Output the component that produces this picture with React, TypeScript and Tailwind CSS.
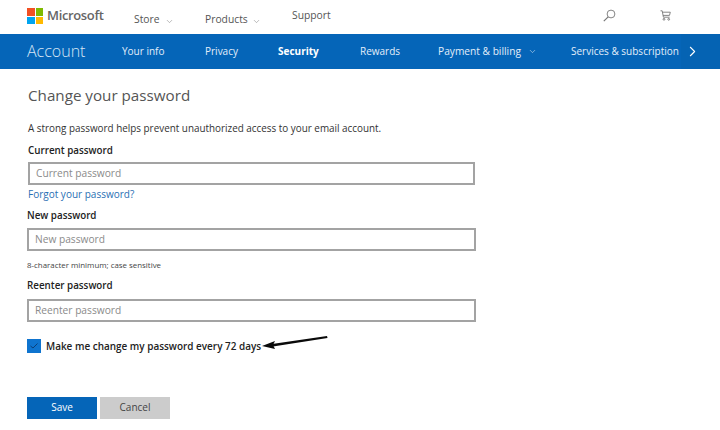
import { ChevronDown, ChevronRight } from 'lucide-react';

function Field({ placeholder, className }: { placeholder: string; className: string }) {
    return (
        <div className={`h-[23px] border-2 border-[#a3a3a3] flex items-center pl-[6px] text-[10.2px] text-[#8a8a8a] ${className}`}>
            {placeholder}
        </div>
    );
}

export default function App() {
    return (
        <div className="w-[720px] h-[430px] overflow-hidden bg-white font-['Open_Sans',sans-serif] text-[#222]">
            {/* Top nav */}
            <div className="h-[34px] flex items-center">
                <div className="ml-[27px] grid grid-cols-2 gap-[1px] w-[16px] h-[16px] -mt-[2px] shrink-0">
                    <div className="bg-[#f25022]" />
                    <div className="bg-[#7fba00]" />
                    <div className="bg-[#00a4ef]" />
                    <div className="bg-[#ffb900]" />
                </div>
                <span className="ml-[4px] w-[56px] -mt-[3px] text-[13px] font-semibold text-[#666] tracking-[-0.35px]">Microsoft</span>
                <div className="ml-[31px] w-[71px] flex items-center text-[10.3px] text-[#555] mt-[5px]">
                    <span>Store</span>
                    <ChevronDown size={9} strokeWidth={1.5} className="ml-[5px] mt-[4px] text-[#888]" />
                </div>
                <div className="w-[87px] flex items-center text-[10.3px] text-[#555] mt-[5px]">
                    <span>Products</span>
                    <ChevronDown size={9} strokeWidth={1.5} className="ml-[4px] mt-[4px] text-[#888]" />
                </div>
                <span className="w-[311px] -mt-[3px] text-[10.3px] text-[#555]">Support</span>
                <svg width="13" height="13" viewBox="0 0 13 13" fill="none" stroke="#777" strokeWidth="0.9" className="-mt-[3px] shrink-0">
                    <circle cx="8" cy="5" r="3.9" />
                    <path d="M5.2 7.8 L0.8 12.2" strokeWidth="1.2" />
                </svg>
                <svg width="11" height="11" viewBox="0 0 11 11" fill="none" stroke="#777" strokeWidth="0.9" className="ml-[44px] -mt-[3px] shrink-0">
                    <path d="M0.5 0.8 L2.2 0.8 L3.4 7.2 L9.6 7.2" />
                    <path d="M2.5 2.2 L10.3 2.2 L9.5 5.4 L3 5.4" />
                    <circle cx="4" cy="9.3" r="0.9" />
                    <circle cx="8.7" cy="9.3" r="0.9" />
                </svg>
            </div>

            {/* Account bar */}
            <div className="h-[35px] bg-[#0565b8] flex items-center text-white text-[10px] whitespace-nowrap overflow-hidden">
                <span className="ml-[27px] w-[95px] -mt-[2px] text-[16px] font-light text-[#d6e6f5]">Account</span>
                <span className="w-[83px] text-[#e3eefa]">Your info</span>
                <span className="w-[73px] text-[#e3eefa]">Privacy</span>
                <span className="w-[82px] font-bold">Security</span>
                <span className="w-[78px] text-[#e3eefa]">Rewards</span>
                <span className="w-[90px] text-[#e3eefa] text-[10.2px]">Payment &amp; billing</span>
                <ChevronDown size={9} strokeWidth={1.5} className="text-[#d6e6f5]" />
                <span className="ml-[34px] w-[109px] text-[#e3eefa]">Services &amp; subscription</span>
                <div className="h-full flex-1 ml-[1px] bg-[#0563b3] flex items-center pl-[3px]">
                    <ChevronRight size={17} strokeWidth={1.5} className="shrink-0" />
                </div>
            </div>

            {/* Form */}
            <div className="pl-[28px] flex flex-col items-start">
                <h1 className="mt-[14px] text-[15.2px] leading-[24px] text-[#555]">Change your password</h1>
                <p className="mt-[14px] text-[9.9px] leading-[14px] text-[#333]">
                    A strong password helps prevent unauthorized access to your email account.
                </p>
                <label className="mt-[9px] text-[9.8px] leading-[14px] font-semibold text-[#222]">Current password</label>
                <Field placeholder="Current password" className="mt-[4px] w-[447px]" />
                <a className="mt-[1px] text-[10px] leading-[16px] text-[#2a6fb3]">Forgot your password?</a>
                <label className="mt-[7px] -ml-[1px] text-[9.8px] leading-[14px] font-semibold text-[#222]">New password</label>
                <Field placeholder="New password" className="mt-[5px] -ml-[1px] w-[449px]" />
                <p className="mt-[8px] -ml-[1px] text-[7.9px] leading-[12px] text-[#444]">8-character minimum; case sensitive</p>
                <label className="mt-[8px] -ml-[1px] text-[9.8px] leading-[14px] font-semibold text-[#222]">Reenter password</label>
                <Field placeholder="Reenter password" className="mt-[6px] -ml-[1px] w-[449px]" />

                <div className="mt-[17px] -ml-[1px] relative flex items-center">
                    <div className="w-[14px] h-[14px] bg-[#0f74cf] flex items-center justify-center">
                        <svg width="8" height="6" viewBox="0 0 8 6" fill="none" stroke="#0a3f78" strokeWidth="1">
                            <path d="M0.5 3 L3 5 L7.5 0.5" />
                        </svg>
                    </div>
                    <span className="ml-[5px] text-[9.95px] font-semibold text-[#222] whitespace-nowrap">Make me change my password every 72 days</span>
                    {/* hand-drawn arrow */}
                    <svg className="absolute left-[235px] top-[-4px]" width="66" height="16" viewBox="0 0 66 16">
                        <path d="M10 9 L65 1 L65.5 3 L11 11.5 Z" fill="#0a0a0a" />
                        <path d="M0 11 L13 6 L11 10 L13 14 Z" fill="#0a0a0a" />
                    </svg>
                </div>

                <div className="mt-[43px] -ml-[1px] flex gap-[3px] text-[10px]">
                    <div className="w-[70px] h-[22px] bg-[#0565b8] text-white flex items-center justify-center">Save</div>
                    <div className="w-[70px] h-[22px] bg-[#cccccc] text-[#444] flex items-center justify-center">Cancel</div>
                </div>
            </div>
        </div>
    );
}
